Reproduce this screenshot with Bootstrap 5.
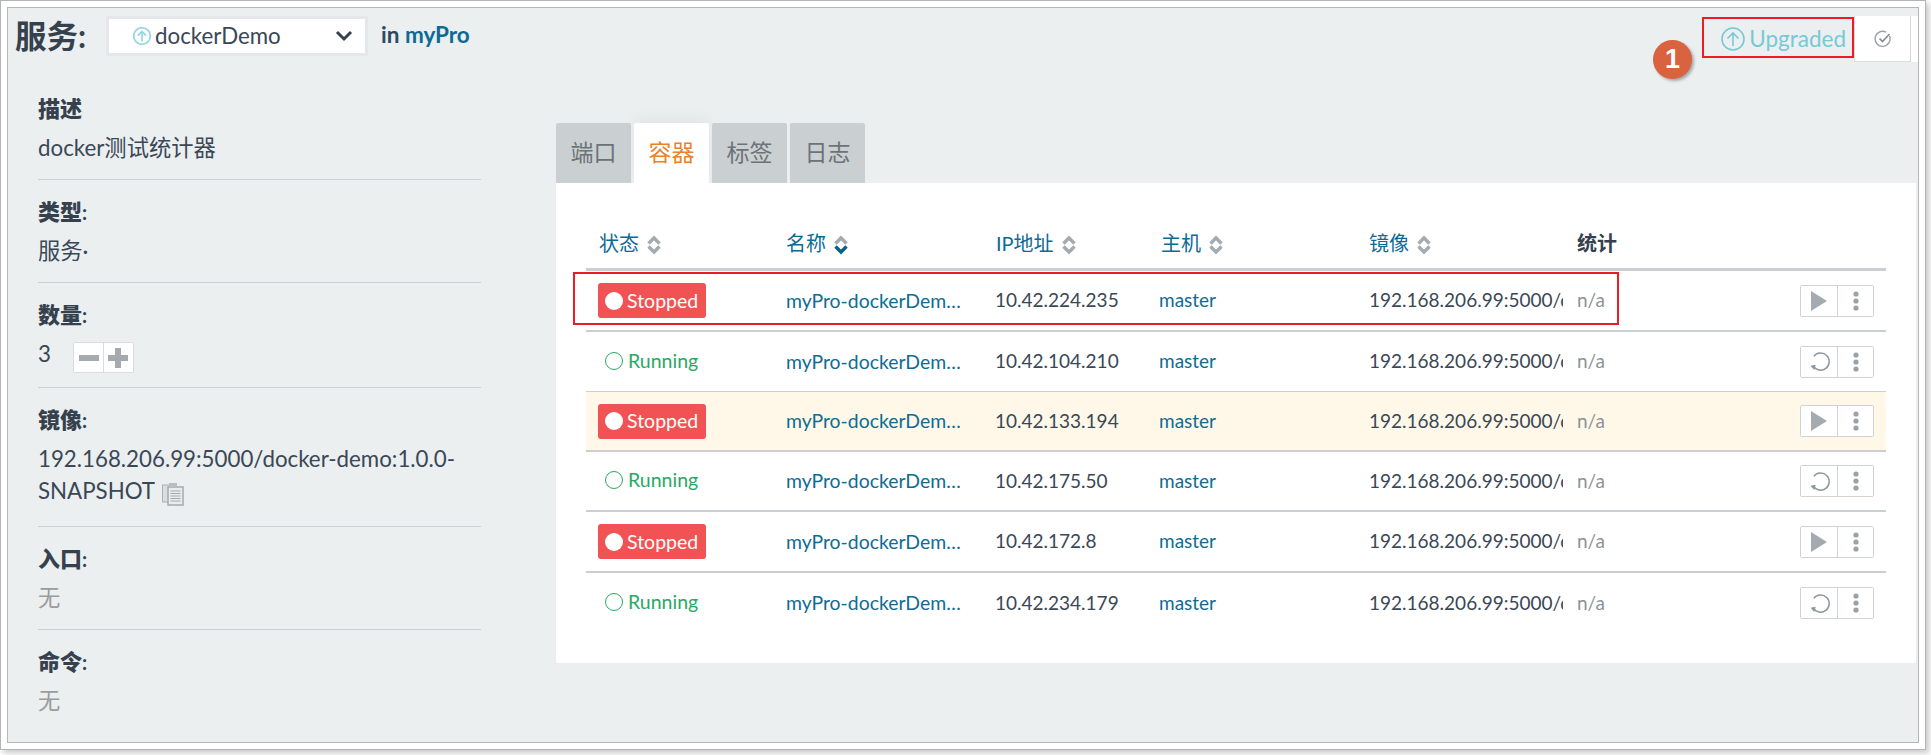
<!DOCTYPE html>
<html lang="zh">
<head>
<meta charset="utf-8">
<title>服务</title>
<link href="https://cdn.jsdelivr.net/npm/bootstrap@5.3.0/dist/css/bootstrap.min.css" rel="stylesheet">
<style>
html,body{margin:0;background:#fff;height:100%;overflow:hidden}
body{font-family:"Lato","Noto Sans CJK SC",sans-serif;font-size:20px;color:#3a4756}
.shot-frame{position:relative;width:1926px;height:750px;border:1px solid #b4b4b4;padding:6px;background:#fff;box-shadow:3px 3px 6px rgba(0,0,0,.22)}
.shot-panel{height:100%;border:1px solid #b4b6b7;background:#ebeff0;overflow:hidden;display:flex;flex-direction:column}
.top-bar{height:85px;flex:none;padding:8px 0 0 7px;align-items:flex-start}
.page-title{font-size:31.5px;font-weight:700;line-height:40px;color:#36414e;margin:0;width:91px;flex:none}
.svc-select{width:262px;height:40px;border:3px solid #e4e8ea;background:#fff;padding:0 12px 0 24px;font-size:22.300px;color:#3a4756;line-height:34px}
.up-small{color:#93d5e1;flex:none;stroke-width:2.2}
.stack-link{font-size:22.500px;font-weight:700;margin:4px 0 0 13px;line-height:30px;color:#2d4a5e}
.stack-link a{color:#0d6a94;text-decoration:none}
.state-up{font-size:22.500px;line-height:40px;color:#78c9d4;margin-right:8px;padding-top:3px;stroke-width:1.6}
.check-btn{width:57px;height:46px;background:#fff;border:1px solid #d9dddf;border-top:0;border-right:1px solid #d3d7d9}
.check-next{width:7px;height:46px;background:#fff;flex:none}
.side-col{width:443px;margin-left:30px;flex:none}
.info-sec{padding:16px 0 15px;border-bottom:1px solid #ccd0d2}
.info-sec:first-child{padding-top:0}
.info-sec:last-child{border-bottom:0}
.info-label{font-size:20px;font-weight:700;line-height:32px;color:#36414e;margin-bottom:7px}
.info-label b{font-size:22px}
.info-value{font-size:22.300px;line-height:32px;color:#3a4756}
.info-none{color:#9a9c9e}
.qty-row{height:34px}
.qty-group{margin-left:22px;margin-top:4px;border:1px solid #d8dcde;border-radius:2px;background:#fff;height:31px}
.qty-btn{width:30px;padding:0;border:0;border-radius:0;background:#fff;display:flex;align-items:center;justify-content:center}
.qty-btn+.qty-btn{border-left:1px solid #d8dcde}
.image-sec{padding-bottom:19px}
.copy-ic{vertical-align:-7px;margin-left:2px}
.main-col{flex:1;margin:30px 0 0 75px;min-width:0;width:0}
.tab-row{gap:3px;height:60px;flex-wrap:nowrap}
.tab-row .nav-link{width:75px;height:60px;padding:0;text-align:center;line-height:59px;font-size:23px;color:#6c7378;background:#cacfd1;border-radius:2px 2px 0 0}
.tab-row .nav-link.active{color:#e8832a;background:#fff;height:62px;box-shadow:0 -6px 12px rgba(0,0,0,.04)}
.tab-body{background:#fff;height:480px;margin-right:2px;padding:30px 30px 0;border-radius:0 0 2px 2px}
.inst-table{width:1300px;table-layout:fixed;border-collapse:separate;border-spacing:0;margin:0;--bs-table-bg:transparent;color:#3a4756}
.inst-table th{height:58px;padding:4px 0 0 14px;border-bottom:3px solid #cbcfd2;font-size:20px;font-weight:400;color:#0c6a96;vertical-align:middle;box-shadow:none;white-space:nowrap}
.inst-table th:first-child{padding-left:13px}
.inst-table th.plain-head{font-weight:700;color:#36414e}
.sort-ic{margin-left:3px;vertical-align:-4px}
.inst-table td{height:60px;padding:0 0 0 14px;border-bottom:2px solid #cbcfd2;font-size:19px;vertical-align:middle;white-space:nowrap;overflow:hidden;box-shadow:none;color:#3a4756}
.inst-table tr:nth-child(1) td,.inst-table tr:nth-child(5) td{height:61px}
.inst-table tr:nth-child(2) td{border-bottom-width:1px}
.inst-table tr:last-child td{border-bottom:0}
.inst-table tr.warn-row td{background:#fff8e8}
.inst-table td a{color:#0f6c93;text-decoration:none}
.inst-table td.addr-cell{padding-left:13px}
.inst-table td.host-cell{padding-left:12px}
.inst-table td.name-cell{font-size:19.400px}
.name-cell a{display:block;width:178px;overflow:hidden;text-overflow:ellipsis}
.inst-table td.cell-na{color:#8b9398;padding-right:12px}
.st-stopped{display:inline-flex;align-items:center;gap:4px;height:35px;width:108px;margin-left:-2px;padding-left:7px;background:#f15354;color:#fff;border-radius:3px;font-size:19.500px}
.st-dot{width:18px;height:18px;border-radius:50%;background:#fff;flex:none}
.st-running{display:inline-flex;align-items:center;gap:5px;margin-left:5px;color:#2aa866;font-size:19.500px}
.st-ring{width:18px;height:18px;border-radius:50%;border:1.5px solid #2aa866;flex:none}
.act-group{display:inline-flex;height:32px;background:#fff;border:1px solid #cfd3d6;border-radius:2px}
.act-group .btn{padding:0;width:36px;border:0;border-radius:0;background:#fff;display:flex;align-items:center;justify-content:center}
.act-group .btn+.btn{border-left:1px solid #cfd3d6}
.redo-ic{margin-left:3px}
.mark-box{position:absolute;border:2.5px solid #ed1c24;pointer-events:none}
.mark-top{left:1701px;top:16px;width:152px;height:41px}
.mark-row{left:572px;top:271px;width:1046px;height:53px}
.mark-num{position:absolute;left:1652px;top:39px;width:39px;height:39px;border-radius:50%;background:#d9623f;color:#fff;font:700 27px/39px "Liberation Sans",sans-serif;text-align:center;box-shadow:2px 2px 3px rgba(0,0,0,.3)}
</style>
</head>
<body>
<svg width="0" height="0" class="position-absolute">
<defs>
<symbol id="ic-sort" viewBox="0 0 14 20"><path d="M1.500 8.500 7 3 12.500 8.500" fill="none" stroke="#a3abb1" stroke-width="3.400"/><path d="M1.500 11.500 7 17 12.500 11.500" fill="none" stroke="#a3abb1" stroke-width="3.400"/></symbol>
<symbol id="ic-sort-on" viewBox="0 0 14 20"><path d="M1.500 8.500 7 3 12.500 8.500" fill="none" stroke="#a3abb1" stroke-width="3.400"/><path d="M1.500 11.500 7 17 12.500 11.500" fill="none" stroke="#0c5f88" stroke-width="3.400"/></symbol>
<symbol id="ic-play" viewBox="2 0 16 20"><path d="M2 0 18 10 2 20z" fill="#a3abb1"/></symbol>
<symbol id="ic-dots" viewBox="0 0 6 20"><circle cx="3" cy="3" r="2.6" fill="#9aa2a8"/><circle cx="3" cy="10" r="2.6" fill="#9aa2a8"/><circle cx="3" cy="17" r="2.6" fill="#9aa2a8"/></symbol>
<symbol id="ic-redo" viewBox="0 0 22 22"><path d="M4.500 5A9 9 0 1 1 3 15" fill="none" stroke="#8d979e" stroke-width="1.5" transform="rotate(-5 11 11)"/><path d="M0.500 15.500 6 14.500 4.500 20z" fill="#8d979e"/></symbol>
<symbol id="ic-up" viewBox="0 0 24 24"><circle cx="12" cy="12" r="11" fill="none" stroke="currentColor"/><path d="M12 19V6M6.500 11.500 12 6l5.500 5.500" fill="none" stroke="currentColor"/></symbol>
</defs>
</svg>
<div class="shot-frame">
<div class="shot-panel">
  <div class="top-bar d-flex">
    <h1 class="page-title">服务:</h1>
    <div class="svc-select d-flex align-items-center">
      <svg width="18" height="18" class="me-1 up-small"><use href="#ic-up"/></svg>
      <span class="flex-grow-1">dockerDemo</span>
      <svg width="18" height="12" viewBox="0 0 18 12"><path d="M2 2l7 7 7-7" fill="none" stroke="#36414e" stroke-width="3"/></svg>
    </div>
    <div class="stack-link">in <a href="#">myPro</a></div>
    <div class="ms-auto d-flex align-items-start">
      <div class="state-up d-flex align-items-center gap-1"><svg width="24" height="24"><use href="#ic-up"/></svg><span>Upgraded</span></div>
      <div class="d-flex">
        <div class="check-btn d-flex align-items-center justify-content-center">
          <svg width="18" height="18" viewBox="0 0 18 18"><path d="M15.500 6A7.500 7.500 0 1 1 12 2.200" fill="none" stroke="#9aa0a6" stroke-width="1.4"/><path d="M5.500 8.500 8.500 11.500 15.500 4" fill="none" stroke="#7d8b95" stroke-width="1.6"/></svg>
        </div>
        <div class="check-next"></div>
      </div>
    </div>
  </div>
  <div class="d-flex flex-grow-1">
    <div class="side-col">
      <div class="info-sec"><div class="info-label"><b>描述</b></div><div class="info-value">docker测试统计器</div></div>
      <div class="info-sec"><div class="info-label"><b>类型</b>:</div><div class="info-value">服务·</div></div>
      <div class="info-sec"><div class="info-label"><b>数量</b>:</div>
        <div class="info-value qty-row d-flex align-items-start"><span>3</span>
          <div class="qty-group btn-group">
            <button class="btn qty-btn" type="button" aria-label="减少"><svg width="20" height="6"><rect width="20" height="6" fill="#a3abb1"/></svg></button>
            <button class="btn qty-btn" type="button" aria-label="增加"><svg width="20" height="20"><path d="M7 0h6v7h7v6h-7v7H7v-7H0V7h7z" fill="#a3abb1"/></svg></button>
          </div>
        </div>
      </div>
      <div class="info-sec image-sec"><div class="info-label"><b>镜像</b>:</div>
        <div class="info-value">192.168.206.99:5000/docker-demo:1.0.0-<br>SNAPSHOT
          <svg width="22" height="24" viewBox="0 0 22 24" class="copy-ic"><rect x="0.500" y="3" width="14" height="17" fill="#d9dddf" stroke="#aab1b6"/><rect x="6" y="5" width="15" height="18" fill="#e9ecee" stroke="#a4abb0" stroke-width="1.500"/><rect x="7" y="1" width="8" height="4" fill="#b7bdc1"/><path d="M8.500 9h10M8.500 11.500h10M8.500 14h10M8.500 16.500h10M8.500 19h10" stroke="#a4abb0"/></svg>
        </div>
      </div>
      <div class="info-sec"><div class="info-label"><b>入口</b>:</div><div class="info-value info-none">无</div></div>
      <div class="info-sec"><div class="info-label"><b>命令</b>:</div><div class="info-value info-none">无</div></div>
    </div>
    <div class="main-col">
      <ul class="nav tab-row">
        <li class="nav-item"><a class="nav-link" href="#">端口</a></li>
        <li class="nav-item"><a class="nav-link active" href="#">容器</a></li>
        <li class="nav-item"><a class="nav-link" href="#">标签</a></li>
        <li class="nav-item"><a class="nav-link" href="#">日志</a></li>
      </ul>
      <div class="tab-body">
        <table class="table inst-table">
          <colgroup><col style="width:186px"><col style="width:210px"><col style="width:165px"><col style="width:208px"><col style="width:208px"><col style="width:323px"></colgroup>
          <thead><tr>
            <th>状态 <svg width="14" height="20" class="sort-ic"><use href="#ic-sort"/></svg></th>
            <th>名称 <svg width="14" height="20" class="sort-ic"><use href="#ic-sort-on"/></svg></th>
            <th>IP地址 <svg width="14" height="20" class="sort-ic"><use href="#ic-sort"/></svg></th>
            <th>主机 <svg width="14" height="20" class="sort-ic"><use href="#ic-sort"/></svg></th>
            <th>镜像 <svg width="14" height="20" class="sort-ic"><use href="#ic-sort"/></svg></th>
            <th class="plain-head">统计</th>
          </tr></thead>
          <tbody>
            <tr><td><span class="st-stopped"><i class="st-dot"></i>Stopped</span></td><td class="name-cell"><a href="#">myPro-dockerDemo-1</a></td><td class="addr-cell">10.42.224.235</td><td class="host-cell"><a href="#">master</a></td><td class="pe-0">192.168.206.99:5000/docker-demo:1.0.0-SNAPSHOT</td><td class="cell-na"><div class="d-flex align-items-center justify-content-between">n/a<span class="act-group"><button class="btn" type="button" aria-label="启动"><svg width="16" height="20"><use href="#ic-play"/></svg></button><button class="btn" type="button" aria-label="更多"><svg width="6" height="20"><use href="#ic-dots"/></svg></button></span></div></td></tr>
            <tr><td><span class="st-running"><i class="st-ring"></i>Running</span></td><td class="name-cell"><a href="#">myPro-dockerDemo-2</a></td><td class="addr-cell">10.42.104.210</td><td class="host-cell"><a href="#">master</a></td><td class="pe-0">192.168.206.99:5000/docker-demo:1.0.0-SNAPSHOT</td><td class="cell-na"><div class="d-flex align-items-center justify-content-between">n/a<span class="act-group"><button class="btn" type="button" aria-label="重启"><svg width="21" height="21" class="redo-ic"><use href="#ic-redo"/></svg></button><button class="btn" type="button" aria-label="更多"><svg width="6" height="20"><use href="#ic-dots"/></svg></button></span></div></td></tr>
            <tr class="warn-row"><td><span class="st-stopped"><i class="st-dot"></i>Stopped</span></td><td class="name-cell"><a href="#">myPro-dockerDemo-3</a></td><td class="addr-cell">10.42.133.194</td><td class="host-cell"><a href="#">master</a></td><td class="pe-0">192.168.206.99:5000/docker-demo:1.0.0-SNAPSHOT</td><td class="cell-na"><div class="d-flex align-items-center justify-content-between">n/a<span class="act-group"><button class="btn" type="button" aria-label="启动"><svg width="16" height="20"><use href="#ic-play"/></svg></button><button class="btn" type="button" aria-label="更多"><svg width="6" height="20"><use href="#ic-dots"/></svg></button></span></div></td></tr>
            <tr><td><span class="st-running"><i class="st-ring"></i>Running</span></td><td class="name-cell"><a href="#">myPro-dockerDemo-4</a></td><td class="addr-cell">10.42.175.50</td><td class="host-cell"><a href="#">master</a></td><td class="pe-0">192.168.206.99:5000/docker-demo:1.0.0-SNAPSHOT</td><td class="cell-na"><div class="d-flex align-items-center justify-content-between">n/a<span class="act-group"><button class="btn" type="button" aria-label="重启"><svg width="21" height="21" class="redo-ic"><use href="#ic-redo"/></svg></button><button class="btn" type="button" aria-label="更多"><svg width="6" height="20"><use href="#ic-dots"/></svg></button></span></div></td></tr>
            <tr><td><span class="st-stopped"><i class="st-dot"></i>Stopped</span></td><td class="name-cell"><a href="#">myPro-dockerDemo-5</a></td><td class="addr-cell">10.42.172.8</td><td class="host-cell"><a href="#">master</a></td><td class="pe-0">192.168.206.99:5000/docker-demo:1.0.0-SNAPSHOT</td><td class="cell-na"><div class="d-flex align-items-center justify-content-between">n/a<span class="act-group"><button class="btn" type="button" aria-label="启动"><svg width="16" height="20"><use href="#ic-play"/></svg></button><button class="btn" type="button" aria-label="更多"><svg width="6" height="20"><use href="#ic-dots"/></svg></button></span></div></td></tr>
            <tr><td><span class="st-running"><i class="st-ring"></i>Running</span></td><td class="name-cell"><a href="#">myPro-dockerDemo-6</a></td><td class="addr-cell">10.42.234.179</td><td class="host-cell"><a href="#">master</a></td><td class="pe-0">192.168.206.99:5000/docker-demo:1.0.0-SNAPSHOT</td><td class="cell-na"><div class="d-flex align-items-center justify-content-between">n/a<span class="act-group"><button class="btn" type="button" aria-label="重启"><svg width="21" height="21" class="redo-ic"><use href="#ic-redo"/></svg></button><button class="btn" type="button" aria-label="更多"><svg width="6" height="20"><use href="#ic-dots"/></svg></button></span></div></td></tr>
          </tbody>
        </table>
      </div>
    </div>
  </div>
</div>
<div class="mark-box mark-top"></div>
<div class="mark-box mark-row"></div>
<div class="mark-num">1</div>
</div>
</body>
</html>
